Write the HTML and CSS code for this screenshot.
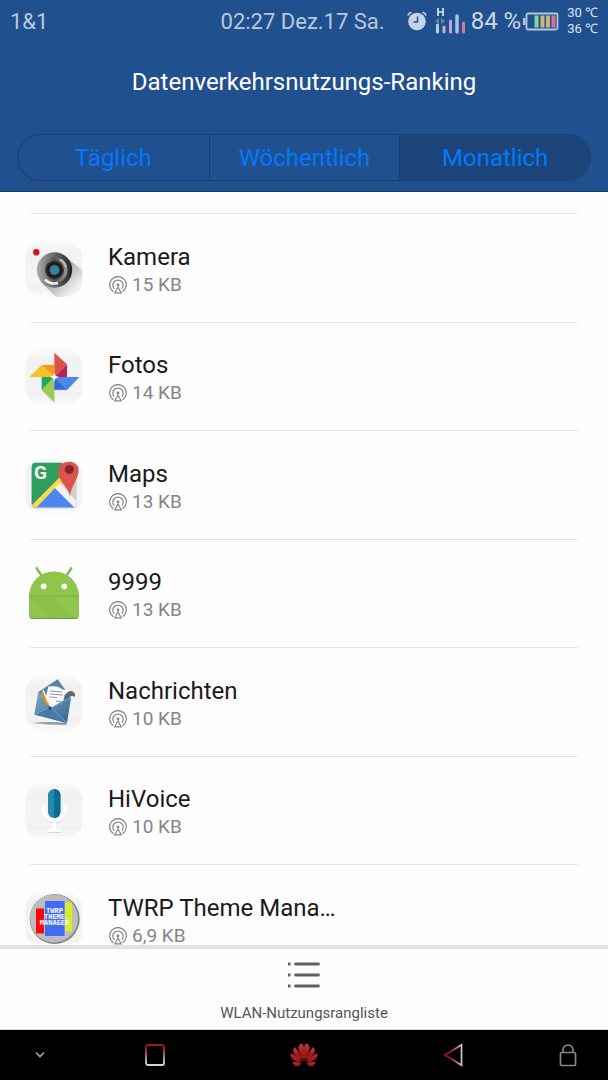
FILE: index.html
```
<!DOCTYPE html>
<html lang="de">
<head>
	<meta charset="utf-8">
	<meta name="viewport" content="width=device-width, initial-scale=1">
	<title>Datenverkehrsnutzungs-Ranking</title>
	<link rel="stylesheet" href="styles.css">
</head>
<body>
	<!-- shared icon parts -->
	<svg class="defs" width="0" height="0" aria-hidden="true">
		<defs>
			<linearGradient id="tileFill" x1="0" y1="0" x2="0" y2="1">
				<stop offset="0" stop-color="#fafafa"/>
				<stop offset=".2" stop-color="#f1f1f1"/>
				<stop offset=".75" stop-color="#f4f4f4"/>
				<stop offset=".8" stop-color="#efefef"/>
				<stop offset="1" stop-color="#fbfbfb"/>
			</linearGradient>
			<clipPath id="tileClip"><rect x="2" y="1" width="56" height="56" rx="17"/></clipPath>
		</defs>
		<symbol id="tile" viewBox="0 0 60 60">
			<rect x="1.500" y="1" width="57" height="56" rx="17" fill="url(#tileFill)"/>
		</symbol>
		<symbol id="signal" viewBox="0 0 18 18">
			<g fill="none" stroke="#858585" stroke-width="1.200">
				<path d="M4.500 15.800a8.300 8.300 0 1 1 9 0"/>
				<path d="M5.200 12.800a5.200 5.200 0 1 1 7.600 0"/>
				<path d="M9 11l3.200 5.800H5.800z"/>
			</g>
			<circle cx="9" cy="9" r="1.400" fill="#858585"/>
		</symbol>
	</svg>

	<header class="header">
		<div class="status">
			<span class="carrier">1&amp;1</span>
			<span class="clock">02:27 Dez.17 Sa.</span>
			<svg class="alarm" width="20" height="20" viewBox="0 0 20 20">
				<circle cx="10" cy="10.500" r="8.800" fill="#c7d4e6"/>
				<path d="M.8 4.500Q2 2 4.500 1.300M19.200 4.500Q18 2 15.500 1.300" fill="none" stroke="#c7d4e6" stroke-width="1.600"/>
				<path d="M10.500 5.500v5.500H6.500" fill="none" stroke="#21508e" stroke-width="1.500"/>
			</svg>
			<svg class="network" width="32" height="28" viewBox="0 0 32 28">
				<path d="M3 1v8M8 1v8M3 5h5" stroke="#dce5f0" stroke-width="1.700"/>
				<path d="M0 14l4-3v6zM10 14l-4-3v6z" fill="#6f83a5"/>
				<path d="M2.500 18v7" stroke="#a5dcc5" stroke-width="3" stroke-linecap="round"/>
				<path d="M9 20v5" stroke="#c5a5e5" stroke-width="3" stroke-linecap="round"/>
				<path d="M15.500 14v11" stroke="#c0a4df" stroke-width="3" stroke-linecap="round"/>
				<path d="M22 9v16" stroke="#a5c2e5" stroke-width="3.500" stroke-linecap="round"/>
				<path d="M28.500 16v9" stroke="#d47f91" stroke-width="3" stroke-linecap="round"/>
			</svg>
			<span class="percent">84 %</span>
			<svg class="battery" width="36" height="20" viewBox="0 0 36 20">
				<rect x="3.500" y="2.500" width="31" height="16" rx="1.500" fill="none" stroke="#b4c6dd" stroke-width="1.800"/>
				<rect x="0" y="7" width="2.500" height="7" fill="#b4c6dd"/>
				<path d="M13.500 4.500v12" stroke="#7fd8a0" stroke-width="4"/>
				<path d="M19.500 4.500v12M25 4.500v12" stroke="#c9b86f" stroke-width="4"/>
				<path d="M30.500 4.500v12" stroke="#cf7595" stroke-width="4"/>
			</svg>
			<span class="temps"><span>30 ℃</span><span>36 ℃</span></span>
		</div>
		<h1 class="title">Datenverkehrsnutzungs-Ranking</h1>
		<div class="tabs">
			<button class="tab" type="button">Täglich</button>
			<button class="tab" type="button">Wöchentlich</button>
			<button class="tab tab-active" type="button">Monatlich</button>
		</div>
	</header>

	<main class="content">
		<ul class="apps">
			<li class="app">
				<svg class="icon" viewBox="0 0 60 60">
					<defs>
						<linearGradient id="lens"><stop offset="0" stop-color="#aaa"/><stop offset=".5" stop-color="#686868"/><stop offset="1" stop-color="#222"/></linearGradient>
						<linearGradient id="lens2"><stop offset="0" stop-color="#999"/><stop offset=".5" stop-color="#555"/><stop offset="1" stop-color="#999"/></linearGradient>
						<linearGradient id="lensShade" x1="0" y1="0" x2="1" y2="1"><stop offset=".3" stop-color="#999"/><stop offset=".8" stop-color="#eee"/></linearGradient>
					</defs>
					<use href="#tile"/>
					<path clip-path="url(#tileClip)" d="M43 18L58 30Q59 52 44 56L33 58 17 42z" fill="url(#lensShade)"/>
					<circle cx="12.300" cy="12.300" r="3.200" fill="#d3121b"/>
					<circle cx="30.500" cy="30" r="17.700" fill="url(#lens)"/>
					<circle cx="30.500" cy="30" r="13" fill="url(#lens2)"/>
					<path d="M21 39.500A13.500 13.500 0 0 0 34 43" fill="none" stroke="#eee" stroke-width="2.500"/>
					<path d="M36 19.500A12 12 0 0 1 42 27" fill="none" stroke="#bbb" stroke-width="2"/>
					<circle cx="30.500" cy="30" r="9.500" fill="#333"/>
					<circle cx="30.500" cy="30" r="7.500" fill="#171315"/>
					<circle cx="30.500" cy="30" r="5.800" fill="#543a36"/>
					<circle cx="30.500" cy="30" r="4.500" fill="#2c86ae"/>
				</svg>
				<div class="info">
					<div class="name">Kamera</div>
					<div class="usage"><svg class="signal"><use href="#signal"/></svg>15 KB</div>
				</div>
			</li>
			<li class="app">
				<svg class="icon" viewBox="0 0 60 60">
					<use href="#tile"/>
					<path d="M5.300 30h12.400v12.700L30.300 55V42.700H43L55.300 30z" fill="#000" opacity=".12"/>
					<path d="M30.300 4.700L43 16.300 30.300 29z" fill="#dd5247"/>
					<path d="M43 16.300V29H30.300z" fill="#b5245a"/>
					<path d="M5.300 29L17.700 17 30.300 29z" fill="#f6c129"/>
					<path d="M17.700 17h12.600v12z" fill="#f7971c"/>
					<path d="M17.700 29h12.600L17.700 41.700z" fill="#22a565"/>
					<path d="M17.700 41.700L30.300 29v25z" fill="#9bcb55"/>
					<path d="M30.300 29h25L43 41.700z" fill="#4b87ec"/>
					<path d="M30.300 29L43 41.700H30.300z" fill="#3367d6"/>
					<path d="M30.300 24.500l1.200 3.300 3.300 1.200-3.300 1.200-1.200 3.300-1.200-3.300-3.300-1.200 3.300-1.200z" fill="#fff"/>
				</svg>
				<div class="info">
					<div class="name">Fotos</div>
					<div class="usage"><svg class="signal"><use href="#signal"/></svg>14 KB</div>
				</div>
			</li>
			<li class="app">
				<svg class="icon" viewBox="0 0 60 60">
					<use href="#tile"/>
					<clipPath id="mapClip"><rect x="7.700" y="5.700" width="44.600" height="44.600" rx="4"/></clipPath>
					<rect x="7.700" y="6.700" width="44.600" height="44.600" rx="4" fill="#bbb"/>
					<g clip-path="url(#mapClip)">
						<path d="M7 5h46v46H7z" fill="#cfcfcf"/>
						<path d="M7 5h31v15L7 51z" fill="#2e9f5e"/>
						<path d="M7 49L36 20l4 6-30 28z" fill="#fdd94e"/>
						<path d="M12 51L31 31l20 20z" fill="#4b87ee"/>
						<path d="M31 31l5-5 20 22v6h-2z" fill="#f1f1f1"/>
					</g>
					<text x="10" y="22" class="map-letter">G</text>
					<path d="M46 39.500C44.500 29 34 25 34 14.500a11 11 0 0 1 20-5C57 20 47.500 27 46 39.500z" fill="#d9544b"/>
					<circle cx="45.300" cy="12.500" r="4.500" fill="#80262a"/>
				</svg>
				<div class="info">
					<div class="name">Maps</div>
					<div class="usage"><svg class="signal"><use href="#signal"/></svg>13 KB</div>
				</div>
			</li>
			<li class="app">
				<svg class="icon" viewBox="0 0 60 60">
					<path d="M12.700 3.300l5.800 9M47.300 3.300l-5.800 9" stroke="#8bb84e" stroke-width="2.500" stroke-linecap="round"/>
					<path d="M5.300 31.500A24.700 24.700 0 0 1 54.700 31.500V51a3 3 0 0 1-3 3H8.300a3 3 0 0 1-3-3z" fill="#73963f"/>
					<path d="M5.300 30.500A24.700 24 0 0 1 54.700 30.500V50a3 3 0 0 1-3 3H8.300a3 3 0 0 1-3-3z" fill="#90c44b"/>
					<path d="M5.300 31h49.400" stroke="#7dab42" stroke-width="1"/>
					<path d="M6 32l19 21h25L28 32z" fill="#86bb46" opacity=".5"/>
					<circle cx="19.700" cy="21.300" r="2.900" fill="#fff"/>
					<circle cx="40.300" cy="21.300" r="2.900" fill="#fff"/>
				</svg>
				<div class="info">
					<div class="name">9999</div>
					<div class="usage"><svg class="signal"><use href="#signal"/></svg>13 KB</div>
				</div>
			</li>
			<li class="app">
				<svg class="icon" viewBox="0 0 60 60">
					<defs><linearGradient id="mail" x1="0" y1="0" x2="1" y2="1"><stop offset="0" stop-color="#79a8cb"/><stop offset="1" stop-color="#346690"/></linearGradient></defs>
					<use href="#tile"/>
					<path d="M8 49q18-2 35 0l-1 2q-16 0-34-2z" fill="#999"/>
					<path d="M14.300 18L33.700 5.300 47 24 26 35z" fill="#5484ab"/>
					<path d="M40 22q1-5 7-5 5 1 4 6-4-3-8 2z" fill="#666"/>
					<path d="M24.500 12.500q8-1 11 1 3 3 11 3-7 3-7 10L27 34l-6-8z" fill="#fafafa"/>
					<path d="M26 17l12 1M26 20l13 1M25 23l8 .5M32 27l5 .5" stroke="#999" stroke-width="1.200"/>
					<path d="M14.300 18L26.300 34.300 47 24l-4 25-32.700-8.500z" fill="url(#mail)"/>
					<path d="M10.300 40.500L26.300 33 43 49z" fill="#4779a4"/>
					<path d="M10.300 40.500L26.300 33 43 49" fill="none" stroke="#83aacb" stroke-width=".8"/>
					<path d="M18 18l5.500 13" stroke="#e58a27" stroke-width="3.500"/>
					<path d="M19 16l5.500 13" stroke="#fff" stroke-width="1.300"/>
					<circle cx="26" cy="34" r="1.500" fill="#263c5c"/>
				</svg>
				<div class="info">
					<div class="name">Nachrichten</div>
					<div class="usage"><svg class="signal"><use href="#signal"/></svg>10 KB</div>
				</div>
			</li>
			<li class="app">
				<svg class="icon" viewBox="0 0 60 60">
					<use href="#tile"/>
					<path d="M19 26v2.500a11.200 11.200 0 0 0 22.400 0V26M30.200 40v8M24.500 49.500h11.500" fill="none" stroke="#d0d0d0" stroke-width="3" stroke-linecap="round"/>
					<path d="M19 25v2.500a11.200 11.200 0 0 0 22.400 0V25M30.200 39v8M24.500 48.500h11.500" fill="none" stroke="#fff" stroke-width="3.500" stroke-linecap="round"/>
					<rect x="24" y="7" width="12.400" height="29" rx="6.200" fill="#2589a8"/>
					<path d="M30.200 7a6.200 6.200 0 0 1 6.200 6.200v16.600a6.200 6.200 0 0 1-6.200 6.200z" fill="#096d92"/>
				</svg>
				<div class="info">
					<div class="name">HiVoice</div>
					<div class="usage"><svg class="signal"><use href="#signal"/></svg>10 KB</div>
				</div>
			</li>
			<li class="app">
				<svg class="icon" viewBox="0 0 60 60">
					<use href="#tile"/>
					<circle cx="30.700" cy="28" r="25" fill="#858585"/>
					<circle cx="30" cy="27.500" r="24" fill="#bcbcbc"/>
					<path d="M12 17.500h8.500v25H12z" fill="#fb0808"/>
					<path d="M41 11.500h7v29h-7z" fill="#d8ef20"/>
					<path d="M20.500 9.500H41v36H20.500z" fill="#426bf3" stroke="#cbd2e8" stroke-width=".7"/>
					<g class="logo-text">
						<text x="30.500" y="22">TWRP</text>
						<text x="30.500" y="28">THEME</text>
						<text x="30.500" y="34">MANAGER</text>
					</g>
				</svg>
				<div class="info">
					<div class="name">TWRP Theme Mana…</div>
					<div class="usage"><svg class="signal"><use href="#signal"/></svg>6,9 KB</div>
				</div>
			</li>
		</ul>
	</main>

	<footer class="toolbar">
		<button class="tool" type="button">
			<svg width="34" height="28" viewBox="0 0 34 28" stroke="#606060" stroke-width="2.800" stroke-linecap="round">
				<path d="M8.500 3h23M8.500 14h23M8.500 25h23"/>
				<path d="M1 3h2.500M1 14h2.500M1 25h2.500" stroke-linecap="butt"/>
			</svg>
			<span>WLAN-Nutzungsrangliste</span>
		</button>
	</footer>

	<nav class="navbar">
		<button class="nav" type="button" aria-label="Ausblenden">
			<svg width="10" height="8" viewBox="0 0 10 8"><path d="M1 1.500l4 4 4-4" fill="none" stroke="#aaa" stroke-width="1.600"/></svg>
		</button>
		<button class="nav" type="button" aria-label="Letzte Apps">
			<svg width="22" height="24" viewBox="0 0 22 24">
				<defs><linearGradient id="red" x1="0" y1="0" x2="0" y2="1"><stop offset=".15" stop-color="#a5161c"/><stop offset=".9" stop-color="#d5d5d5"/></linearGradient></defs>
				<rect x="2" y="2" width="18" height="20" rx="2" fill="none" stroke="url(#red)" stroke-width="1.800"/>
			</svg>
		</button>
		<button class="nav" type="button" aria-label="Startbildschirm">
			<svg width="28" height="24" viewBox="0 0 28 24">
				<defs>
					<linearGradient id="petalFill" x1="0" y1="0" x2="0" y2="1"><stop offset="0" stop-color="#b84444"/><stop offset=".5" stop-color="#a2181e"/></linearGradient>
					<g id="half" fill="url(#petalFill)">
						<path d="M13.300 18Q16 5 12.200.5 8.500 1 8.300 5 8.500 10 13.300 18z"/>
						<path d="M12.300 18.500Q9 8 4.800 4 2 7 4 11 7 15.500 12.300 18.500z"/>
						<path d="M11.800 19.500Q6 12 .8 10.500 0 14.500 3.500 17.300 7 19 11.800 19.500z"/>
						<path d="M11.500 20.500Q6 18.500 2.500 19.200 4 23 7 23.200 9.500 23 11.500 20.500z"/>
					</g>
				</defs>
				<use href="#half"/>
				<use href="#half" transform="translate(28 0) scale(-1 1)"/>
			</svg>
		</button>
		<button class="nav" type="button" aria-label="Zurück">
			<svg width="20" height="24" viewBox="0 0 20 24">
				<defs><linearGradient id="back"><stop offset=".35" stop-color="#a5161c"/><stop offset="1" stop-color="#ccc"/></linearGradient></defs>
				<path d="M18.500 1.800v20.400L2 12z" fill="none" stroke="url(#back)" stroke-width="1.700"/>
			</svg>
		</button>
		<button class="nav" type="button" aria-label="Sperren">
			<svg width="18" height="24" viewBox="0 0 18 24" fill="none" stroke="#858585" stroke-width="1.700">
				<rect x="1.500" y="9.500" width="15" height="13" rx="1"/>
				<path d="M4 9V7a5 5 0 0 1 10 0v2"/>
			</svg>
		</button>
	</nav>
</body>
</html>
```

FILE: styles.css
```
* {
	box-sizing: border-box;
}

body {
	margin: 0;
	height: 100vh;
	display: flex;
	flex-direction: column;
	font-family: Roboto, "Liberation Sans", sans-serif;
	background: #fdfdfd;
	color: #1a1a1a;
}

button {
	margin: 0;
	padding: 0;
	border: 0;
	background: none;
	font-family: inherit;
	color: inherit;
}

svg {
	display: block;
	flex: none;
}

.defs {
	position: absolute;
}

/* blue top area */
.header {
	flex: none;
	padding-bottom: 10px;
	background: #21508e;
	border-bottom: 1px solid #173b6b;
}

.status {
	display: flex;
	align-items: center;
	height: 42px;
	padding: 0 10px;
	font-size: 22px;
	color: #b9c8dc;
	white-space: nowrap;
}

.clock {
	margin-left: auto;
	margin-right: 22px;
}

.network {
	margin: 0 4px 0 8px;
}

.percent {
	font-size: 24px;
	color: #ccd8e8;
}

.battery {
	margin: 0 8px 0 2px;
}

.temps {
	display: flex;
	flex-direction: column;
	font-size: 13px;
	line-height: 16px;
	color: #dde6f1;
}

.title {
	margin: 0;
	height: 92px;
	line-height: 80px;
	font-size: 24px;
	font-weight: 400;
	text-align: center;
	color: #fff;
}

.tabs {
	display: grid;
	grid-template-columns: 1fr 1fr 1fr;
	height: 47px;
	margin: 0 17px;
	border: 1px solid #193f72;
	border-radius: 24px;
	overflow: hidden;
}

.tab {
	padding-top: 1px;
	font-size: 24px;
	color: #0079ff;
}

.tab + .tab {
	border-left: 1px solid #193f72;
}

.tab-active {
	background: #1d4478;
}

/* app ranking */
.content {
	flex: 1;
	min-height: 0;
	overflow: hidden;
	padding: 21px 30px 0;
}

.apps {
	margin: 0;
	padding: 0;
	list-style: none;
}

.app {
	display: flex;
	align-items: center;
	height: 109px;
	padding-top: 3px;
	border-top: 1px solid #e3e3e3;
}

.app:nth-child(even) {
	height: 108px;
}

.icon {
	width: 60px;
	height: 60px;
	margin-left: -6px;
}

.info {
	margin-left: 24px;
}

.name {
	font-size: 24px;
	line-height: 30px;
}

.usage {
	display: flex;
	align-items: center;
	gap: 4px;
	font-size: 19px;
	line-height: 26px;
	color: #858585;
}

.signal {
	width: 20px;
	height: 18px;
}

.map-letter {
	font: bold 19px Roboto, sans-serif;
	fill: #f5f5f5;
}

.logo-text {
	font: bold 7px "DejaVu Sans Mono", monospace;
	fill: #fff;
	text-anchor: middle;
}

/* bottom action */
.toolbar {
	flex: none;
	height: 85px;
	border-top: 4px solid #e2e2e2;
	border-bottom: 1px solid #d8d8d8;
}

.tool {
	display: flex;
	flex-direction: column;
	align-items: center;
	gap: 14px;
	width: 100%;
	height: 100%;
	padding-top: 12px;
	font-size: 15px;
	line-height: 20px;
	color: #555;
}

.navbar {
	flex: none;
	display: grid;
	grid-template-columns: 80px 1fr 1fr 1fr 80px;
	height: 50px;
	background: #000;
}

.nav {
	display: flex;
	align-items: center;
	justify-content: center;
}
```
